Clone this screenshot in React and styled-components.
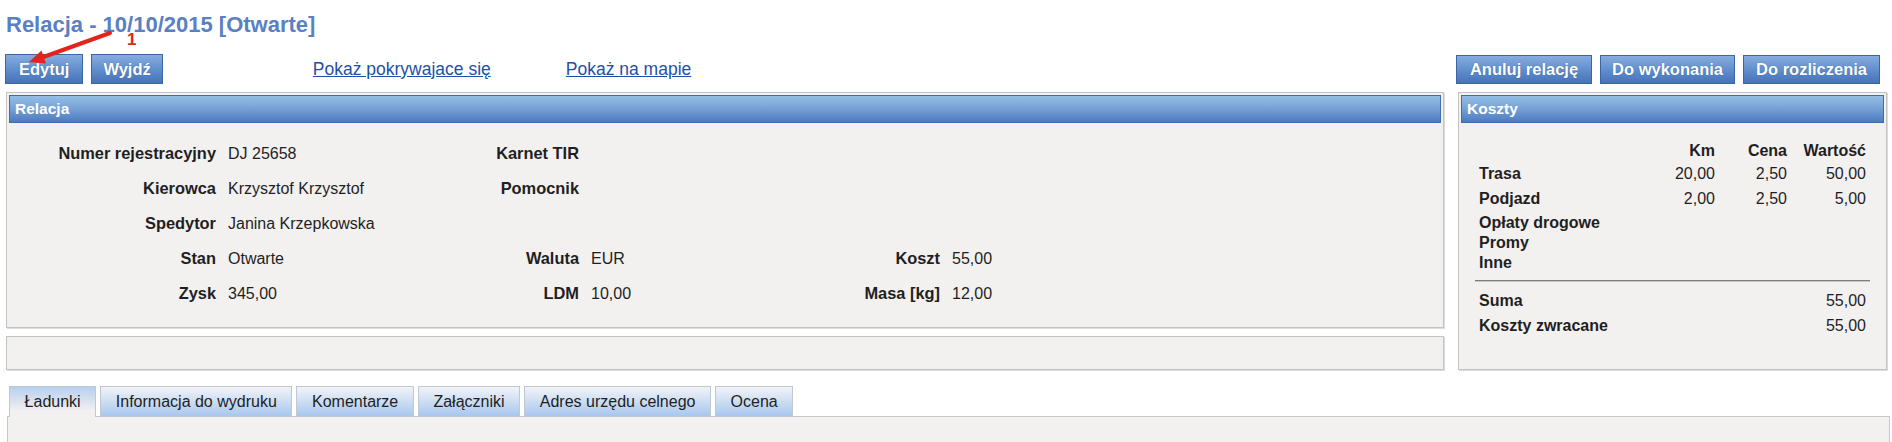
import React from 'react';
import styled, {createGlobalStyle} from 'styled-components';

const font = '"Liberation Sans", Arial, sans-serif';
const panelBg = '#f3f0f0';
const panelBorder = '#c3c3c3';
const textColor = '#1f1f1f';

const GlobalStyle = createGlobalStyle`
    html, body {
        margin: 0;
        padding: 0;
        background: #ffffff;
        font-family: ${font};
        color: ${textColor};
    }
`;

const Page = styled.div`
    position: relative;
    width: 1892px;
    height: 442px;
    overflow: hidden;
    padding: 12px 5px 0 6px;
    box-sizing: border-box;
`;

const Title = styled.h1`
    margin: 0;
    font-size: 22px;
    line-height: 26px;
    font-weight: bold;
    color: #5a80c4;
`;

const Toolbar = styled.div`
    display: flex;
    align-items: center;
    height: 30px;
    margin: 16px 7px 0 -1px;
`;

const ButtonGroup = styled.div`
    display: flex;
    gap: 8px;
    margin-left: ${props => props.$push ? 'auto' : '0'};
`;

const Button = styled.button`
    height: ${props => props.$short ? '29px' : '30px'};
    padding: 0 ${props => props.$pad || 13}px;
    border: 1px solid #3a66a6;
    background: linear-gradient(#86addf, #5f8ccb 55%, #4673b9);
    color: #ffffff;
    font-family: ${font};
    font-size: 16.5px;
    font-weight: bold;
    text-shadow: 0 0 1px rgba(20, 50, 100, 0.6);
    cursor: pointer;
`;

const ToolLink = styled.a`
    margin-left: ${props => props.$offset}px;
    font-size: 17.5px;
    color: #1f50a6;
    text-decoration: underline;
`;

const Main = styled.div`
    display: flex;
    gap: 14px;
    margin-top: 8px;
`;

const LeftColumn = styled.div`
    flex: 1;
    display: flex;
    flex-direction: column;
    gap: 8px;
`;

const Panel = styled.div`
    width: ${props => props.$width ? props.$width + 'px' : 'auto'};
    box-sizing: border-box;
    padding: 2px;
    background: ${panelBg};
    border: 1px solid ${panelBorder};
    box-shadow: 1px 1px 0 #dcdcdc;
`;

const EmptyPanel = styled(Panel)`
    height: 34px;
`;

const PanelHeader = styled.div`
    height: 28px;
    box-sizing: border-box;
    display: flex;
    align-items: center;
    padding-left: 5px;
    border: 1px solid #3f6cab;
    background: linear-gradient(#95bee6, #74a0d6 50%, #4c7bc0);
    color: #ffffff;
    font-size: 15.5px;
    font-weight: bold;
`;

const DetailsGrid = styled.div`
    display: grid;
    grid-template-columns: 207px 200px 139px 200px 137px 200px;
    grid-auto-rows: 35px;
    column-gap: 12px;
    padding: 13px 0 14px;
    align-items: center;
    font-size: 16px;
`;

const Label = styled.span`
    text-align: right;
    font-weight: bold;
    font-size: 16.4px;
`;

const Value = styled.span`
    text-align: left;
`;

const CostBody = styled.div`
    padding: 17px 18px 0;
    font-size: 16px;
`;

const CostRow = styled.div`
    display: grid;
    grid-template-columns: 1fr 70px 72px 79px;
    align-items: center;
    height: ${props => props.$h}px;
    margin-top: ${props => props.$top || 0}px;
`;

const CostLabel = styled.span`
    font-weight: bold;
`;

const Num = styled.span`
    text-align: right;
    font-weight: ${props => props.$bold ? 'bold' : 'normal'};
`;

const Divider = styled.div`
    height: 0;
    margin: 6px -4px 0;
    border-top: 1px solid #7d7d7d;
    border-bottom: 1px solid #c9c9c9;
`;

const Tabs = styled.div`
    margin: 16px -3px 0 1px;
`;

const TabStrip = styled.div`
    display: flex;
    gap: 4px;
    position: relative;
    z-index: 1;
    margin: 0 0 -1px 2px;
`;

const Tab = styled.div`
    height: 31px;
    box-sizing: border-box;
    display: flex;
    align-items: center;
    padding: 0 14.6px;
    font-size: 16px;
    color: #1e1e1e;
    border: 1px solid #c2c8d0;
    border-bottom: ${props => props.$active ? 'none' : '1px solid #c2c8d0'};
    background: ${props => props.$active
        ? `linear-gradient(#b7d0ef, ${panelBg} 80%)`
        : 'linear-gradient(#f1f4f8, #a8c7ee)'};
`;

const TabContent = styled.div`
    height: 40px;
    background: ${panelBg};
    border: 1px solid #c8c8c8;
`;

const Callout = styled.svg`
    position: absolute;
    left: 0;
    top: 0;
`;

const CalloutNumber = styled.span`
    position: absolute;
    left: 127px;
    top: 30px;
    font-size: 17px;
    font-weight: bold;
    color: #e4231c;
`;

const details = [
    ['Numer rejestracyjny', 'DJ 25658', 'Karnet TIR', '', '', ''],
    ['Kierowca', 'Krzysztof Krzysztof', 'Pomocnik', '', '', ''],
    ['Spedytor', 'Janina Krzepkowska', '', '', '', ''],
    ['Stan', 'Otwarte', 'Waluta', 'EUR', 'Koszt', '55,00'],
    ['Zysk', '345,00', 'LDM', '10,00', 'Masa [kg]', '12,00'],
];

const costs = [
    {label: 'Trasa', km: '20,00', price: '2,50', value: '50,00', h: 24},
    {label: 'Podjazd', km: '2,00', price: '2,50', value: '5,00', h: 26},
    {label: 'Opłaty drogowe', h: 22},
    {label: 'Promy', h: 18},
    {label: 'Inne', h: 22},
];

const tabs = ['Ładunki', 'Informacja do wydruku', 'Komentarze', 'Załączniki', 'Adres urzędu celnego', 'Ocena'];

const App = () => {
    return(
        <Page>
            <GlobalStyle/>
            <Title>Relacja - 10/10/2015 [Otwarte]</Title>
            <Toolbar>
                <ButtonGroup>
                    <Button>Edytuj</Button>
                    <Button $pad={11}>Wyjdź</Button>
                </ButtonGroup>
                <ToolLink href='#' $offset={150}>Pokaż pokrywajace się</ToolLink>
                <ToolLink href='#' $offset={75}>Pokaż na mapie</ToolLink>
                <ButtonGroup $push>
                    <Button $short $pad={13}>Anuluj relację</Button>
                    <Button $short $pad={11}>Do wykonania</Button>
                    <Button $short $pad={12}>Do rozliczenia</Button>
                </ButtonGroup>
            </Toolbar>
            <Main>
                <LeftColumn>
                    <Panel>
                        <PanelHeader>Relacja</PanelHeader>
                        <DetailsGrid>
                            {details.map((row, i) => row.map((cell, j) => j % 2 === 0
                                ? <Label key={i + '-' + j}>{cell}</Label>
                                : <Value key={i + '-' + j}>{cell}</Value>))}
                        </DetailsGrid>
                    </Panel>
                    <EmptyPanel/>
                </LeftColumn>
                <Panel $width={429}>
                    <PanelHeader>Koszty</PanelHeader>
                    <CostBody>
                        <CostRow $h={22}>
                            <span/>
                            <Num $bold>Km</Num>
                            <Num $bold>Cena</Num>
                            <Num $bold>Wartość</Num>
                        </CostRow>
                        {costs.map(c => (
                            <CostRow key={c.label} $h={c.h}>
                                <CostLabel>{c.label}</CostLabel>
                                <Num>{c.km}</Num>
                                <Num>{c.price}</Num>
                                <Num>{c.value}</Num>
                            </CostRow>
                        ))}
                        <Divider/>
                        <CostRow $h={26} $top={6}>
                            <CostLabel>Suma</CostLabel>
                            <span/><span/>
                            <Num>55,00</Num>
                        </CostRow>
                        <CostRow $h={24}>
                            <CostLabel>Koszty zwracane</CostLabel>
                            <span/><span/>
                            <Num>55,00</Num>
                        </CostRow>
                    </CostBody>
                </Panel>
            </Main>
            <Tabs>
                <TabStrip>
                    {tabs.map((t, i) => <Tab key={t} $active={i === 0}>{t}</Tab>)}
                </TabStrip>
                <TabContent/>
            </Tabs>
            <Callout width='160' height='80' viewBox='0 0 160 80'>
                <line x1='110' y1='33' x2='42' y2='57.5' stroke='#e4231c' strokeWidth='4' strokeLinecap='round'/>
                <polygon points='29,62 46,63.5 41.5,50.5' fill='#e4231c'/>
            </Callout>
            <CalloutNumber>1</CalloutNumber>
        </Page>
    )
};

export default App;
